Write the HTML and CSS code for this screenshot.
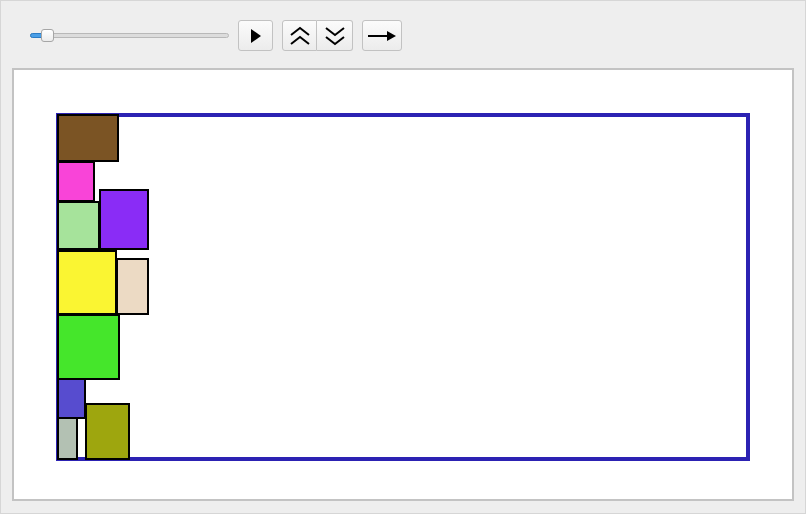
FILE: index.html
```html
<!DOCTYPE html>
<html>
<head>
<meta charset="utf-8">
<link rel="stylesheet" href="styles.css">
</head>
<body>
<div class="frame">
  <div class="toolbar">
    <div class="slider">
      <div class="track"></div>
      <div class="fill"></div>
      <div class="thumb"></div>
    </div>
    <button class="btn play" aria-label="Play">
      <svg width="12" height="14" viewBox="0 0 12 14"><path d="M1 0 L11 7 L1 14 Z" fill="#000"/></svg>
    </button>
    <div class="group">
      <button class="btn up" aria-label="Faster">
        <svg width="22" height="20" viewBox="0 0 22 20"><path d="M2 9 L11 2 L20 9 M2 18 L11 11 L20 18" fill="none" stroke="#000" stroke-width="2"/></svg>
      </button>
      <button class="btn down" aria-label="Slower">
        <svg width="22" height="20" viewBox="0 0 22 20"><path d="M2 2 L11 9 L20 2 M2 11 L11 18 L20 11" fill="none" stroke="#000" stroke-width="2"/></svg>
      </button>
    </div>
    <button class="btn dir" aria-label="Direction">
      <svg width="28" height="12" viewBox="0 0 28 12"><path d="M0 6 H20" stroke="#000" stroke-width="2"/><path d="M19 1 L28 6 L19 11 Z" fill="#000"/></svg>
    </button>
  </div>
  <div class="panel">
    <svg class="canvas" width="778" height="429" viewBox="14 70 778 429">
      <rect x="58" y="115" width="690" height="344" fill="none" stroke="#2c22b3" stroke-width="4"/>
      <g stroke="#000" stroke-width="2">
        <rect x="58" y="115" width="60" height="46" fill="#7b5424"/>
        <rect x="58" y="162" width="36" height="39" fill="#f944d8"/>
        <rect x="58" y="202" width="41" height="47" fill="#a6e39b"/>
        <rect x="100" y="190" width="48" height="59" fill="#8a2cf6"/>
        <rect x="117" y="259" width="31" height="55" fill="#ecdac4"/>
        <rect x="58" y="251" width="58" height="63" fill="#faf532"/>
        <rect x="58" y="315" width="61" height="64" fill="#45e62b"/>
        <rect x="58" y="379" width="27" height="39" fill="#574ccf"/>
        <rect x="58" y="418" width="19" height="41" fill="#b3c1b3"/>
        <rect x="86" y="404" width="43" height="55" fill="#9ea60e"/>
      </g>
    </svg>
  </div>
</div>
</body>
</html>
```
FILE: styles.css
```css
html, body {
  margin: 0;
  padding: 0;
  background: #ffffff;
}
.frame {
  width: 806px;
  height: 514px;
  box-sizing: border-box;
  border: 1px solid #d6d6d6;
  background: #eeeeee;
  padding: 19px 0 0 11px;
}
.toolbar {
  display: flex;
  align-items: center;
  height: 31px;
  padding-left: 18px;
}
.slider {
  position: relative;
  width: 199px;
  height: 14px;
  margin-right: 9px;
}
.track {
  position: absolute;
  left: 0;
  right: 0;
  top: 4px;
  height: 5px;
  box-sizing: border-box;
  border: 1px solid #b8b8b8;
  border-radius: 3px;
  background: #dcdcdc;
}
.fill {
  position: absolute;
  left: 0;
  width: 14px;
  top: 4px;
  height: 5px;
  box-sizing: border-box;
  border: 1px solid #2b7bc4;
  border-radius: 3px;
  background: #4a9ee6;
}
.thumb {
  position: absolute;
  left: 11px;
  top: 0;
  width: 13px;
  height: 13px;
  box-sizing: border-box;
  border: 1px solid #a6a6a6;
  border-radius: 3px;
  background: linear-gradient(#ffffff, #ececec);
}
.btn {
  display: flex;
  align-items: center;
  justify-content: center;
  height: 31px;
  padding: 0;
  margin: 0;
  box-sizing: border-box;
  border: 1px solid #c2c2c2;
  border-radius: 3px;
  background: linear-gradient(#fbfbfb, #ececec);
}
.play {
  width: 35px;
  margin-right: 9px;
}
.group {
  display: flex;
  margin-right: 9px;
}
.up {
  width: 35px;
  border-radius: 3px 0 0 3px;
}
.down {
  width: 36px;
  border-radius: 0 3px 3px 0;
  border-left: none;
}
.dir {
  width: 40px;
}
.panel {
  margin-top: 17px;
  width: 782px;
  height: 433px;
  box-sizing: border-box;
  border: 2px solid #c3c3c3;
  background: #ffffff;
}
.canvas {
  display: block;
}
```
